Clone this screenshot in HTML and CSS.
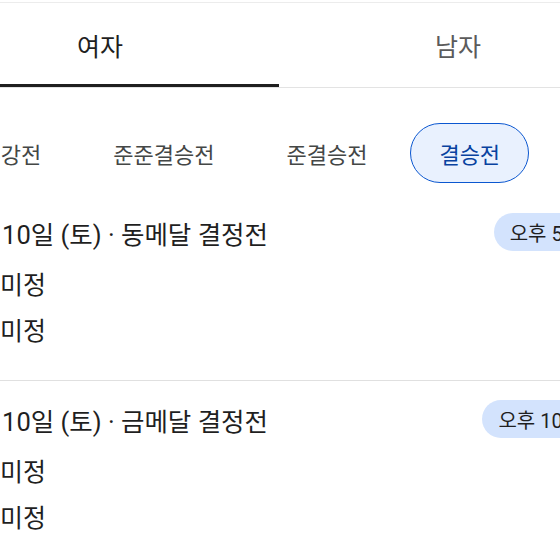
FILE: index.html
```html
<!DOCTYPE html>
<html lang="ko">
<head>
  <meta charset="UTF-8">
  <title>경기 일정</title>
  <meta name="viewport" content="width=device-width, initial-scale=1">
  <link rel="stylesheet" href="styles.css">
</head>
<body>
  <div class="page">
    <div class="tabs">
      <div class="tab active">여자</div>
      <div class="tab">남자</div>
    </div>

    <div class="chips">
      <span class="chip">16강전</span>
      <span class="chip">준준결승전</span>
      <span class="chip">준결승전</span>
      <span class="chip selected">결승전</span>
    </div>

    <div class="match">
      <div class="match-head">
        <span class="match-title">8월 10일 (토) · 동메달 결정전</span>
        <span class="time">오후 5:00</span>
      </div>
      <div class="team"><span class="emblem"></span>미정</div>
      <div class="team"><span class="emblem"></span>미정</div>
    </div>

    <div class="match">
      <div class="match-head">
        <span class="match-title">8월 10일 (토) · 금메달 결정전</span>
        <span class="time">오후 10:00</span>
      </div>
      <div class="team"><span class="emblem"></span>미정</div>
      <div class="team"><span class="emblem"></span>미정</div>
    </div>
  </div>
</body>
</html>
```

FILE: styles.css
```css
body { margin: 0; overflow: hidden; background: #fff; color: #1f1f1f; font-family: Roboto, "Noto Sans CJK KR", sans-serif; }
.page { width: 716px; margin-left: -79px; padding-top: 2px; }

.tabs { display: flex; border-top: 1px solid #ececec; border-bottom: 1px solid #e3e3e3; }
.tab { flex: 1; height: 84px; display: flex; align-items: center; justify-content: center; font-size: 25px; color: #5b5b5b; box-sizing: border-box; border-bottom: 3px solid transparent; padding-top: 3px; }
.tab.active { color: #1f1f1f; border-bottom-color: #1f1f1f; }

.chips { display: flex; gap: 14px; padding: 35px 0 11px 26px; white-space: nowrap; }
.chip { height: 60px; box-sizing: border-box; padding: 0 28px; border: 1px solid transparent; border-radius: 30px; display: flex; align-items: center; font-size: 22px; color: #444746; }
.chip.selected { border-color: #0b57d0; background: #e9f1fe; color: #0842a0; }

.match { padding: 19px 31px 25px 37px; }
.match + .match { border-top: 1px solid #e0e0e0; }
.match-head { display: flex; align-items: center; justify-content: space-between; height: 38px; }
.match-title { font-size: 25.5px; white-space: nowrap; }
.time { height: 38px; padding: 0 16px; border-radius: 19px; background: #d3e3fd; display: flex; align-items: center; font-size: 20px; white-space: nowrap; }
.team { display: flex; align-items: center; font-size: 25px; line-height: 46px; }
.match-head + .team { margin-top: 12px; }
.emblem { width: 28px; height: 28px; margin-right: 14px; border-radius: 50%; background: #e8eaed; }
```
